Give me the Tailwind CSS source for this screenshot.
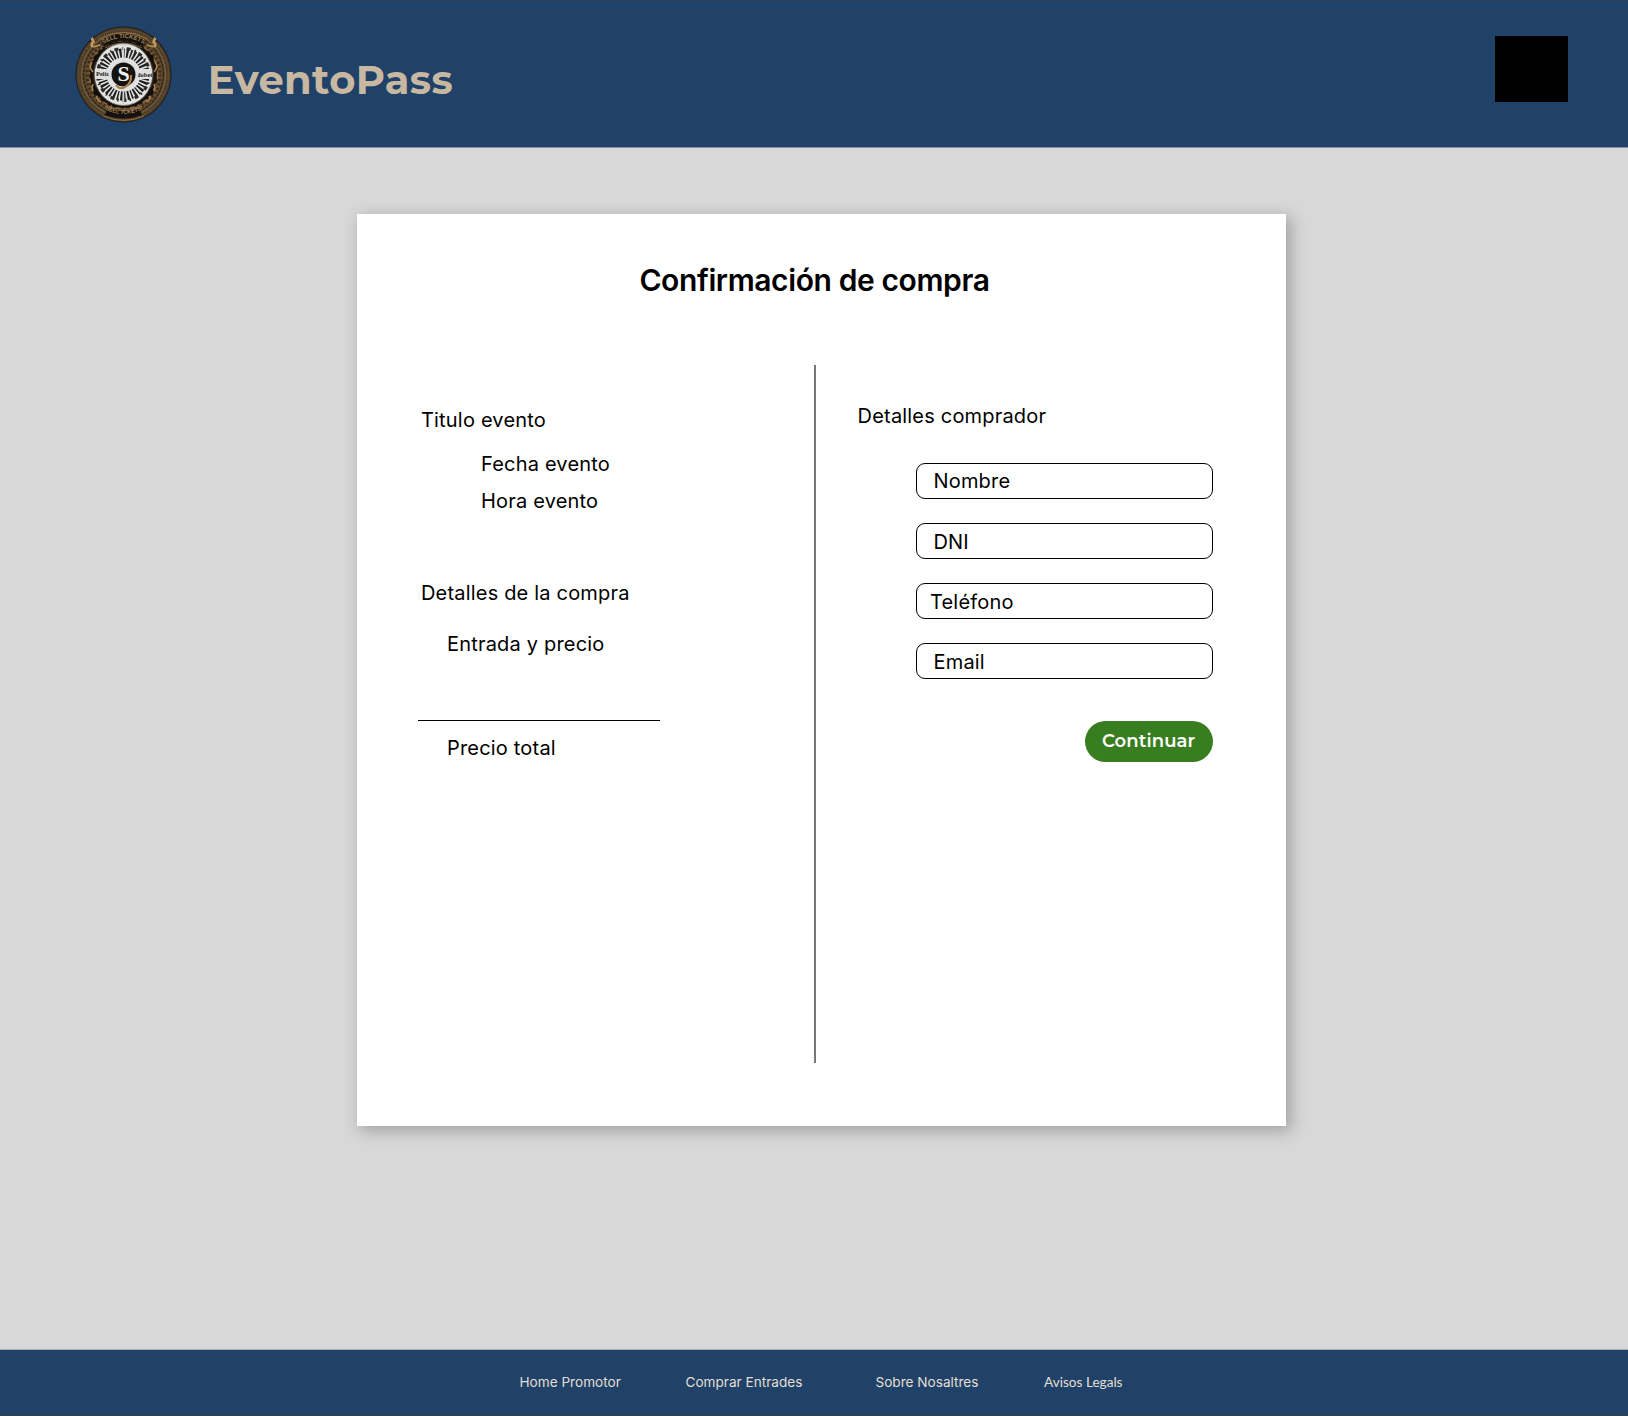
<!DOCTYPE html>
<html lang="es">
<head>
<meta charset="utf-8">
<title>EventoPass</title>
<script src="https://cdn.jsdelivr.net/npm/@tailwindcss/browser@4"></script>
</head>
<body class="flex h-[1416px] w-[1628px] flex-col overflow-hidden bg-[#d8d8d8] font-['Inter',sans-serif] text-black">
<header class="flex h-[147px] shrink-0 items-start border-t border-[#2f4358] bg-[#214268] pl-[75px] shadow-[0_1px_0_#8495ad]">
  <svg class="mt-[25px] h-[98px] w-[98px] shrink-0" viewBox="0 0 98 98">
    <defs>
      <radialGradient id="rim"><stop offset=".62" stop-color="#2a2018"/><stop offset=".74" stop-color="#6b5132"/><stop offset=".84" stop-color="#574328"/><stop offset=".94" stop-color="#6f583a"/><stop offset="1" stop-color="#16120e"/></radialGradient>
      <path id="top" d="M12.5 48a36 36 0 0 1 72 0"/>
      <path id="bottom" d="M8.5 48a40 40 0 0 0 80 0"/>
    </defs>
    <circle cx="48.5" cy="48.5" r="48" fill="url(#rim)"/>
    <g fill="none">
      <circle cx="48.5" cy="48.5" r="46.4" stroke="#4a3b29" stroke-width=".8"/>
      <circle cx="48.5" cy="48.5" r="44" stroke="#3a2e20" stroke-width="2.6" stroke-dasharray="1 1"/>
      <circle cx="48.5" cy="48.5" r="42" stroke="#80684a" stroke-width=".8"/>
      <circle cx="48.5" cy="48.5" r="40" stroke="#33281b" stroke-width="1.5" stroke-dasharray="3 1"/>
      <circle cx="48.5" cy="48.5" r="36.5" stroke="#3b2d1d" stroke-width="3" stroke-dasharray="2 2.5"/>
      <circle cx="48.5" cy="48.5" r="32.5" stroke="#14110e" stroke-width="3.5"/>
      <circle cx="48.5" cy="48.5" r="34" stroke="#8d6a40" stroke-width="1.4" stroke-dasharray="5 4 2 3"/>
      <path d="M27.500 17.500Q48.500 5 69.500 17.500M31 86Q48.500 92 66 86" stroke="#14110e" stroke-width="7"/>
      <path d="M24 13Q48.500 0 73 13M30 22Q48.500 12 67 22" stroke="#94714a" stroke-width=".8"/>
      <path d="M30 80Q48.500 86 67 80M28 90Q48.500 99 69 90" stroke="#9b7446" stroke-width=".8"/>
      <path d="M25 19l-7 2M72 19l7 2" stroke="#b9935a" stroke-width="1.6"/>
      <path d="M17.500 21q-2-3 1-5q-1-3-2-4M79.500 21q2-3-1-5q1-3 2-4" stroke="#bf9a63" stroke-width="2.600"/>
      <path d="M17 36q-4 5 1 10M80 36q4 5-1 10M18 58q-3 6 4 11q-1 5 4 7M79 58q3 6-4 11q1 5-4 7" stroke="#ab8451" stroke-width="1.6"/>
    </g>
    <g fill="#100f0e"><circle cx="23" cy="32" r="3.800"/><circle cx="75" cy="32" r="3.800"/><circle cx="22" cy="66" r="3.800"/><circle cx="75" cy="66" r="3.800"/></g>
    <g font-family="Liberation Sans, sans-serif" font-size="6" font-weight="700" fill="#a8865a">
      <text text-anchor="middle"><textPath href="#top" startOffset="50%">SELL TICKETS</textPath></text>
      <text font-size="5.500" text-anchor="middle"><textPath href="#bottom" startOffset="50%">SELL TCKETS</textPath></text>
    </g>
    <ellipse cx="48.500" cy="48.500" rx="29" ry="31" fill="#e3e3e2" stroke="#77726a" stroke-width=".8"/>
    <circle cx="48.500" cy="48.500" r="21.500" fill="none" stroke="#1f1f1f" stroke-width="9" stroke-dasharray="2.200 1.700 1.500 1.500"/>
    <circle cx="48.500" cy="48.500" r="26" fill="none" stroke="#2c2c2c" stroke-width="3" stroke-dasharray="4 4 1.500 3"/>
    <path d="M48.500 18v61" stroke="#cfcfcf" stroke-width="1.500"/>
    <path d="M20 43h16v10H20zM61 43h16v10H61z" fill="#dededd"/>
    <g font-family="Liberation Serif, serif" font-size="6.500" font-weight="700" fill="#26231f"><text x="21" y="50">Pelic</text><text x="62" y="51">dobet</text></g>
    <circle cx="48.500" cy="48.500" r="14.500" fill="#dedede"/>
    <circle cx="48.500" cy="48.500" r="12" fill="#151311"/>
    <path d="M41 59q3 5 9 2q7-4 6-12" stroke="#a98150" stroke-width="2" fill="none"/>
    <text x="48.500" y="55" text-anchor="middle" font-family="Liberation Serif, serif" font-size="22" font-weight="700" fill="#f1f1f1">S</text>
  </svg>
  <span class="mt-[54px] ml-[34.800px] font-['Montserrat',Inter,sans-serif] text-[40px] leading-[49px] font-bold tracking-[0.36px] text-[#c8b8a2]">EventoPass</span>
  <div class="mt-[35px] mr-[60.500px] ml-auto h-[65.500px] w-[72.500px] bg-black"></div>
</header>
<main class="flex grow pt-[67px] pl-[357.400px]">
  <section class="flex h-[912px] w-[928.600px] flex-col bg-white shadow-[4px_4px_15px_1px_rgba(0,0,0,0.25)]">
    <h1 class="mt-[48px] ml-[282px] text-[30px] leading-[36px] font-semibold tracking-[-0.39px] whitespace-nowrap">Confirmación de compra</h1>
    <div class="mt-[66.500px] flex h-[698px] text-[20px] leading-[24px] font-[370] tracking-[0.19px] whitespace-nowrap">
      <div class="w-[456.600px] pl-[63.600px]">
        <h2 class="mt-[43px]">Titulo evento</h2>
        <p class="mt-[20px] ml-[60px]">Fecha evento</p>
        <p class="mt-[13px] ml-[60px]">Hora evento</p>
        <h2 class="mt-[68px]">Detalles de la compra</h2>
        <p class="mt-[27px] ml-[26px]">Entrada y precio</p>
        <hr class="mt-[64px] -ml-[2.500px] w-[242px] border-t border-black">
        <p class="mt-[15px] ml-[26px]">Precio total</p>
      </div>
      <div class="w-[2px] bg-[#777]"></div>
      <form class="w-[396.600px] pl-[41.600px]">
        <h2 class="mt-[39px]">Detalles comprador</h2>
        <div class="mt-[35.500px] ml-[58.400px] flex flex-col gap-[24px]">
          <label class="block h-[36px] rounded-[9px] border border-black pt-[5px] pl-[16.500px]">Nombre</label>
          <label class="block h-[36px] rounded-[9px] border border-black pt-[6px] pl-[16.500px]">DNI</label>
          <label class="block h-[36px] rounded-[9px] border border-black pt-[6px] pl-[13px]">Teléfono</label>
          <label class="block h-[36px] rounded-[9px] border border-black pt-[6px] pl-[16.500px]">Email</label>
        </div>
        <button type="button" class="mt-[42px] ml-auto block h-[40.500px] w-[128px] rounded-full bg-[#387e20] font-['Montserrat',Inter,sans-serif] text-[18px] leading-[39px] font-semibold tracking-[0.1px] text-white">Continuar</button>
      </form>
    </div>
  </section>
</main>
<footer class="flex h-[66px] shrink-0 border-b border-[#34424f] bg-[#214268] pt-[23px] pl-[519.500px] text-[13.600px] leading-[18px] font-[370] whitespace-nowrap text-[#e2dfd3] shadow-[0_-1px_0_#a3b0b0]">
  <a class="w-[166px]">Home Promotor</a>
  <a class="w-[190px]">Comprar Entrades</a>
  <a class="w-[168.500px]">Sobre Nosaltres</a>
  <a class="font-['Lato',sans-serif] font-normal">Avisos Legals</a>
</footer>
</body>
</html>
